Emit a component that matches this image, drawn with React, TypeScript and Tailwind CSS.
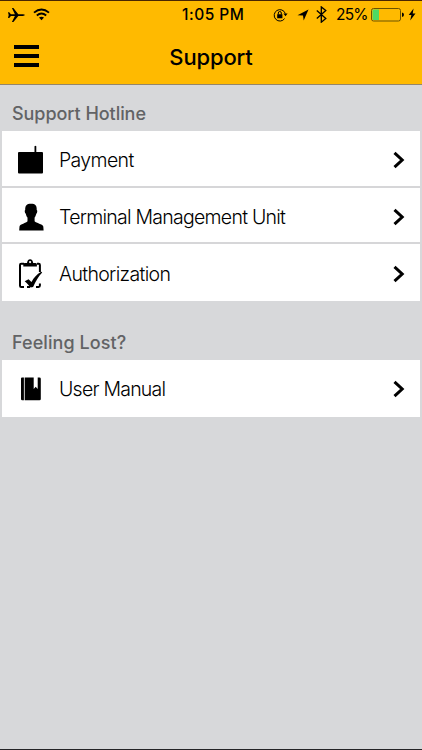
import type { ReactNode } from 'react';

interface Item {
  label: string;
  icon: ReactNode;
  className: string;
}

const PaymentIcon = () => (
  <svg width="28" height="32" viewBox="0 0 28 32">
    <rect x="2" y="8" width="25" height="21.500" rx="1" />
    <path d="M18.500 9V2.300q.9-1.300 1.800 0V9z" />
  </svg>
);

const PersonIcon = () => (
  <svg width="28" height="32" viewBox="0 0 28 32">
    <path d="M9.200 8.900C9 4.600 10.700 2.700 15 2.700s6 1.900 5.700 6.200c1 .3.6 3-.4 3.800-.5 2-1 3-1.700 3.900v3.600c1.700 2 7.900 2.700 8.700 5.200l.3 4H3.200l.3-4c.8-2.500 6.500-3.200 8-5.200v-3.600c-.8-.9-1.300-2-1.700-3.900-1-.8-1.500-3.500-.6-3.800z" />
  </svg>
);

const ClipboardIcon = () => (
  <svg width="28" height="32" viewBox="0 0 28 32">
    <path d="M8 5.800H5.200Q4 5.800 4 7v20.700q0 1.200 1.200 1.200H8M21 5.800h1.700q1.200 0 1.200 1.200v7M11 28.900h3M20 28.900h2.600q1.300 0 1.300-1.300v-2" fill="none" stroke="#000" strokeWidth="2" />
    <path fillRule="evenodd" d="M7.300 8.600V6.300Q7.300 4.900 9 4.900h2C11.300 2.600 12.300 1.200 14.100 1.200s2.800 1.400 3.100 3.700h2q1.700 0 1.700 1.400v2.300zM14.100 3a1.100 1.100 0 1 0 0 2.200 1.100 1.100 0 0 0 0-2.200z" />
    <path d="M8.700 23.200l3.800-2 3 2.700c2.400-4.200 5.200-7.600 9.700-10.100l1 .7c-3.700 3.800-6.400 8.700-9.100 14.600l-2.500.5c-1.900-2.200-3.600-4.400-5.900-6.400z" />
  </svg>
);

const BookIcon = () => (
  <svg width="28" height="32" viewBox="0 0 28 32">
    <path d="M6 4.500h1.900v22.700H6.200Q5 27.200 5 26V5.600q0-1.100 1-1.100zM8.700 4.500h14.600q1.500 0 1.500 1.300V26q0 1.200-1.300 1.200H8.700z" />
    <path d="M17.700 4h4v12l-2-2.300-2 2.300z" fill="#fff" />
  </svg>
);

const hotlines: Item[] = [
  { label: 'Payment', icon: <PaymentIcon />, className: 'tracking-[-0.65px]' },
  { label: 'Terminal Management Unit', icon: <PersonIcon />, className: 'tracking-[-0.74px]' },
  { label: 'Authorization', icon: <ClipboardIcon />, className: 'tracking-[-0.67px]' },
];

const manuals: Item[] = [
  { label: 'User Manual', icon: <BookIcon />, className: 'tracking-[-0.76px]' },
];

function StatusBar() {
  return (
    <div className="relative flex h-[27px] items-center">
      <svg className="ml-[7px]" width="19" height="16" viewBox="0 0 19 16">
        <path d="M1 5.200h1.200l1.700 2.100h4L4.900 1h1.500l4.900 6.300h4.600q1.800.1 2 .8-.2.700-2 .8h-4.600L6.400 15H4.900l3-6.100h-4L2.200 11H1l.7-2.900z" />
      </svg>
      <svg className="ml-[7px]" width="17" height="13" viewBox="0 0 17 13" fill="none" stroke="#000" strokeWidth="1.900">
        <path d="M1 4.600q7.500-6.400 15 0M3.800 7.500q4.700-3.900 9.400 0" />
        <path d="M6 9.600q2.500-1.900 5 0L8.500 12.200z" fill="#000" stroke="none" />
      </svg>
      <span className="absolute left-[182px] top-[5px] text-[15.500px] leading-[18px] font-medium tracking-[0.500px] whitespace-nowrap">1:05 PM</span>
      <div className="absolute left-[273px] top-0 flex h-[27px] items-center">
        <svg width="15" height="14" viewBox="0 0 15 14">
          <path d="M11.600 10.600A5.700 5.700 0 1 1 12.300 5.500" fill="none" stroke="#000" strokeWidth="1" />
          <path d="M10.400 5.600h4.200l-2.100 2.600zM4.200 6.200h5.200v4H4.200z" />
          <path d="M5.300 6.500V5a1.500 1.500 0 0 1 3 0v1.500" fill="none" stroke="#000" strokeWidth="1" />
        </svg>
        <svg className="ml-[9px]" width="12" height="12" viewBox="0 0 12 12">
          <path d="M.5 6.300L11.500.5 6.700 11.500 6 6.500z" />
        </svg>
        <svg className="ml-[7px]" width="11" height="17" viewBox="0 0 11 17" fill="none" stroke="#000" strokeWidth="1.300">
          <path d="M.8 4.500l9 8-4.500 3.700V.9l4.500 3.600-9 8" />
        </svg>
        <span className="mt-px ml-[9px] w-[34px] text-[15.500px] tracking-[-0.800px]">25%</span>
        <svg className="mt-px ml-px" width="34" height="14" viewBox="0 0 34 14">
          <rect x=".5" y=".5" width="29" height="12.500" rx="2" fill="none" stroke="#6b5200" strokeWidth="1" />
          <path d="M2.500 1.500H8v10.500H2.500q-1 0-1-1v-8.500q0-1 1-1z" fill="#4cd964" />
          <path d="M31 4.500q2 .5 2 2.300T31 9z" />
        </svg>
        <svg className="ml-[3px]" width="8" height="13" viewBox="0 0 8 13">
          <path d="M5.600.5L.7 7.100h2.700L2.200 12.400 7.500 5.500H4.700z" />
        </svg>
      </div>
    </div>
  );
}

function List({ items }: { items: Item[] }) {
  return (
    <ul className="mx-[2px] bg-white">
      {items.map((item) => (
        <li key={item.label} className="flex h-[56.700px] items-center border-b-2 border-[#d6d6d8] pt-[4px] pl-[14px] last:border-b-0 last:pt-[2px]">
          {item.icon}
          <span className={`mt-px ml-[15px] flex-1 text-[19.500px] font-light whitespace-nowrap ${item.className}`}>{item.label}</span>
          <svg className="mr-[14px]" width="14" height="18" viewBox="0 0 14 18" fill="none" stroke="#000" strokeWidth="3">
            <path d="M2.500 1.800L10.200 9l-7.700 7.200" />
          </svg>
        </li>
      ))}
    </ul>
  );
}

export default function App() {
  return (
    <div className="flex h-[750px] w-[422px] flex-col overflow-hidden border-t border-b border-t-[#4a2500] border-b-[#242426] bg-[#d7d8da] font-['Inter',sans-serif] text-black">
      <header className="h-[84px] shrink-0 border-b border-[#94866a] bg-[#ffba00]">
        <StatusBar />
        <div className="relative flex h-[58px] items-center justify-center">
          <button className="absolute top-[17px] left-[14px] flex flex-col gap-[5px]" aria-label="Menu">
            <span className="h-[4px] w-[25px] bg-black" />
            <span className="h-[4px] w-[25px] bg-black" />
            <span className="h-[4px] w-[25px] bg-black" />
          </button>
          <h1 className="text-[22px] font-medium tracking-[-0.150px]">Support</h1>
        </div>
      </header>
      <main>
        <h2 className="flex h-[46px] items-end pb-[4px] pl-3 text-[18px] font-medium tracking-[-0.050px] text-[#626365]">Support Hotline</h2>
        <List items={hotlines} />
        <h2 className="flex h-[59px] items-end pb-[4px] pl-3 text-[18px] font-medium tracking-[0.080px] text-[#626365]">Feeling Lost?</h2>
        <List items={manuals} />
      </main>
    </div>
  );
}
